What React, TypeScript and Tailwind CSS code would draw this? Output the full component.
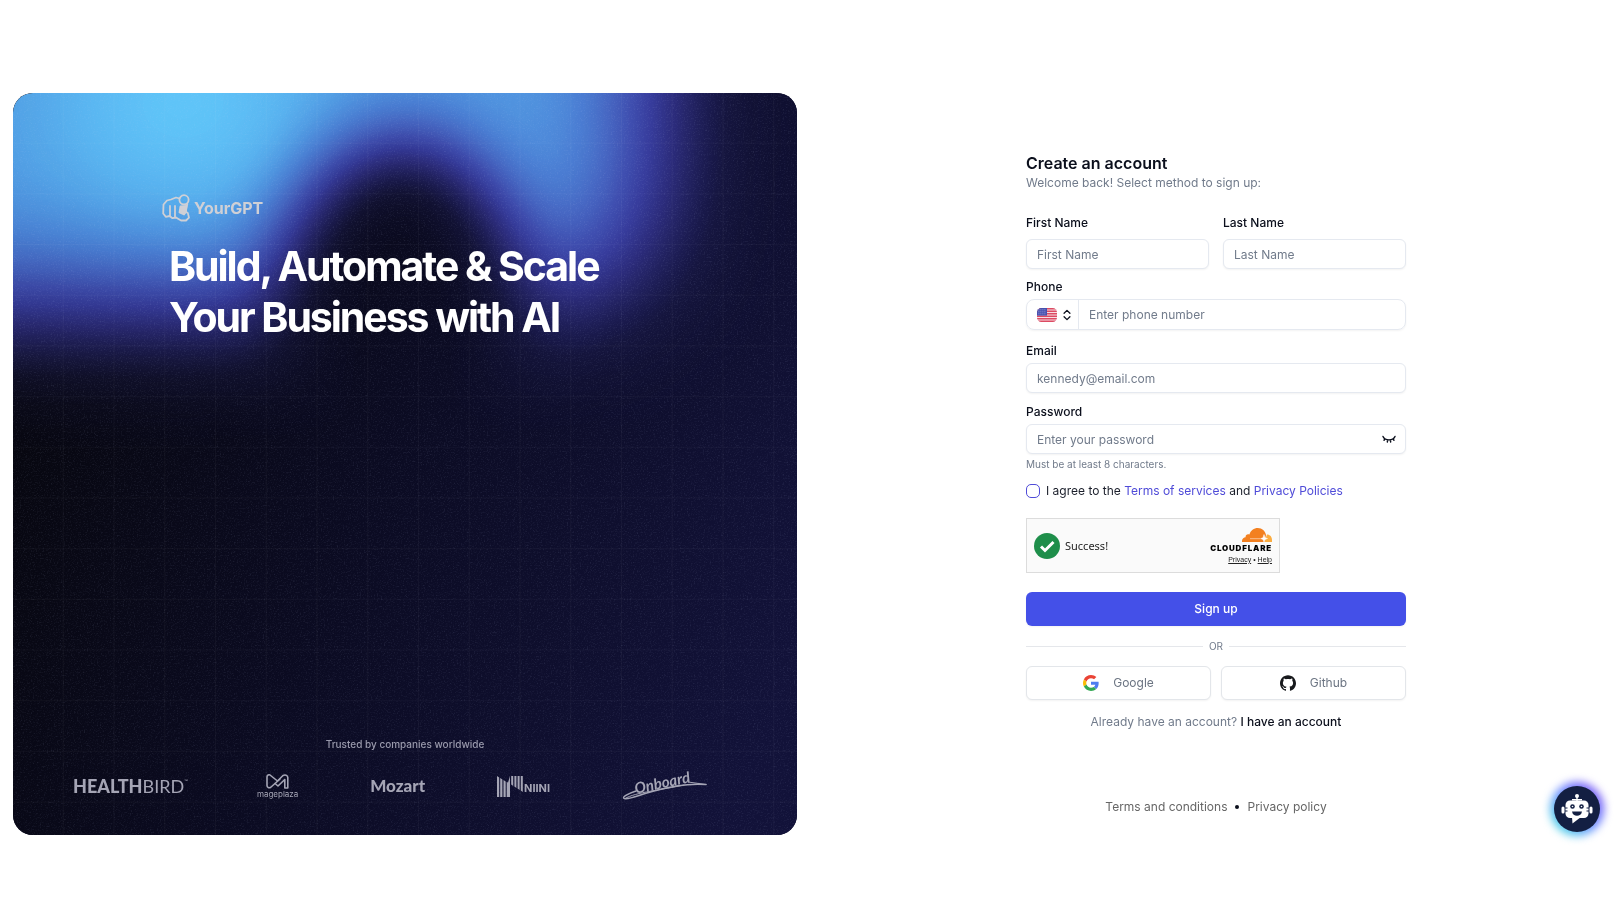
import type { ReactNode } from 'react';
import { ChevronsUpDown } from 'lucide-react';

const FIELD =
  'h-[30px] w-full rounded-md border border-[#e5e9f0] bg-white px-[10px] text-xs text-gray-800 shadow-xs outline-none placeholder:text-[#717b8b] focus:border-indigo-400';
const LABEL = 'text-xs leading-4 font-medium text-[#0b0f1c]';

function PanelBackground() {
  return (
    <svg
      className="absolute inset-0 h-full w-full"
      viewBox="0 0 784 743"
      preserveAspectRatio="none"
      aria-hidden="true"
    >
      <defs>
        <linearGradient id="base" x1="0" y1="0.4" x2="1" y2="0.75">
          <stop offset="0" stopColor="#07070f" />
          <stop offset="0.45" stopColor="#0b0b22" />
          <stop offset="1" stopColor="#121239" />
        </linearGradient>
        <pattern id="grid" width="50.75" height="50.75" patternUnits="userSpaceOnUse">
          <path d="M50.75 0V50.75H0" fill="none" stroke="#fff" strokeOpacity="0.05" strokeWidth="1.2" />
        </pattern>
        <filter id="hull" filterUnits="userSpaceOnUse" x="-500" y="-500" width="1500" height="1100" colorInterpolationFilters="sRGB">
          <feGaussianBlur stdDeviation="66" />
        </filter>
        <filter id="hole" x="-80%" y="-80%" width="260%" height="260%" colorInterpolationFilters="sRGB">
          <feGaussianBlur stdDeviation="40" />
        </filter>
        {/* maps a grey level to black, indigo, blue and cyan */}
        <filter id="ramp" filterUnits="userSpaceOnUse" x="0" y="0" width="784" height="743" colorInterpolationFilters="sRGB">
          <feComponentTransfer>
            <feFuncR type="table" tableValues="0 0.03 0.08 0.13 0.17 0.21 0.24 0.26 0.29 0.33 0.37" />
            <feFuncG type="table" tableValues="0 0.03 0.08 0.13 0.19 0.27 0.37 0.47 0.58 0.7 0.8" />
            <feFuncB type="table" tableValues="0 0.09 0.24 0.39 0.53 0.63 0.72 0.8 0.87 0.94 0.99" />
          </feComponentTransfer>
        </filter>
        <filter id="noise" colorInterpolationFilters="sRGB">
          <feTurbulence type="fractalNoise" baseFrequency="0.7" numOctaves="2" />
          <feColorMatrix values="0 0 0 0 0.8  0 0 0 0 0.85  0 0 0 0 1  2 2 0 0 -2" />
        </filter>
      </defs>
      <rect width="784" height="743" fill="url(#base)" />
      <g style={{ mixBlendMode: 'screen' }}>
        <g filter="url(#ramp)">
          <rect width="784" height="743" fill="#000" />
          <path
            d="M-400 -400H640V80Q640 210 530 205H300Q200 215 -400 212Z"
            fill="#fff"
            fillOpacity="0.8"
            filter="url(#hull)"
          />
          <ellipse cx="170" cy="10" rx="135" ry="110" fill="#fff" fillOpacity="0.95" filter="url(#hull)" />
          <ellipse cx="390" cy="215" rx="122" ry="168" fill="#000" filter="url(#hole)" />
        </g>
      </g>
      <rect width="784" height="743" fill="url(#grid)" />
      <rect width="784" height="743" filter="url(#noise)" opacity="0.09" />
    </svg>
  );
}

function HandLogo() {
  return (
    <svg width="28" height="28" viewBox="0 0 28 28" fill="none" stroke="currentColor" strokeWidth="1.8" strokeLinecap="round" strokeLinejoin="round" aria-hidden="true">
      <path d="M17.500 4.500 14 3.500 9 5.500 5 6.500 1.500 10.500 1.200 19.500 3.800 22.800 7.500 22 10.500 24.200 14 23.500 19 26.500h5l3-2.800-1.200-4.800-2.300-1.400 1.800-7.500" />
      <circle cx="22" cy="5.800" r="4.600" />
      <path d="M8 12v9.500M13 12v11" />
      <path d="M18.500 12.500 17.500 18.500 22 20.500 24 18 24.500 12Z" fill="currentColor" />
    </svg>
  );
}

function MageplazaMark() {
  return (
    <svg width="23" height="15" viewBox="0 0 23 15" fill="none" stroke="currentColor" strokeWidth="1.600" strokeLinejoin="round" strokeLinecap="round" aria-hidden="true">
      <path d="M4 1 11.500 7 17 1.500c2-1 4.800-.5 4.800 2V14h-3V5.500L12 12 9 9.500 4.500 13.500C3 14 1 13.500 1 11.500V3c0-2 2-2.500 3-2Z" />
      <path d="M9 9.500 14 5" />
    </svg>
  );
}

function NiiniMark() {
  return (
    <svg width="27" height="21" viewBox="0 0 27 21" fill="currentColor" aria-hidden="true">
      <path d="M0 0l2.200 1.500V21H0zM3.200 2l2.200 1.500V21H3.200zM6.500 4l2.200 1.500V21H6.500zM9.700 6l1.300.500L13 0v21H9.700zM14.200 0h2v10l-2-1.500zM17.400 0h2v12l-2-1.500zM20.600 0h2v14l-2-1.500zM23.800 0h2v16l-2-1.500z" />
    </svg>
  );
}

function OnboardMark() {
  return (
    <div className="relative h-8 w-[85px]">
      <svg className="absolute inset-0" width="85" height="32" viewBox="0 0 85 32" fill="none" stroke="currentColor" strokeLinecap="round" aria-hidden="true">
        <path d="M14 21C5 24 0 27 2 28.500c3 2 14-3 28-7S66 13 84 14.500" strokeWidth="1.500" />
        <path d="M3 28.500C14 22 40 20 62 15M84 14.500 66 12" strokeWidth="1" />
      </svg>
      <span className="absolute top-0.5 left-3 -rotate-12 font-['Lato'] text-[15px] leading-5 font-bold italic">Onboard</span>
    </div>
  );
}

function UsFlag() {
  return (
    <svg width="20" height="14" viewBox="0 0 20 14" aria-hidden="true">
      <clipPath id="flag">
        <rect width="20" height="14" rx="4.500" />
      </clipPath>
      <g clipPath="url(#flag)">
        <rect width="20" height="14" fill="#f6dfe4" />
        <path d="M0 .8h20M0 3.300h20M0 5.800h20M0 8.300h20M0 10.800h20M0 13.300h20" stroke="#dc4a62" strokeWidth="1.400" />
        <rect width="10" height="7.600" fill="#4650ae" />
        <path d="M1.500 1.800h8M1.500 3.800h8M1.500 5.800h8" stroke="#c9cdf0" strokeWidth="0.800" strokeDasharray="0.800 1.200" />
      </g>
    </svg>
  );
}

function ClosedEye() {
  return (
    <svg width="14" height="10" viewBox="0 0 14 10" fill="none" stroke="#0b0f1c" strokeWidth="1.400" strokeLinecap="round" aria-hidden="true">
      <path d="M1 1.500C3 6 11 6 13 1.500M3 4 2 5.300M11 4l1 1.300M5.700 5 5.300 7M8.300 5 8.700 7" />
    </svg>
  );
}

function CloudIcon() {
  return (
    <svg width="30" height="14" viewBox="0 0 30 14" aria-hidden="true">
      <path d="M22 14 25 6.500c3 0 5 2.300 5 5.500v2Z" fill="#fbad41" />
      <path d="M0 14c-.3-3 1.500-4.600 3.600-4.700C3.400 7 5.400 5.600 7.400 6.600 8.500 2.500 12 0 15.800 0c4.400 0 7.400 3 8.200 7l-1.600 7Z" fill="#f38020" />
      <path d="M8 10.700h14M22 6.500l1 3.200 2.500.8-2.500 1-1 2.500-1-2.500-2-1 2-.8Z" stroke="#fff" strokeWidth="0.500" fill="#fff" />
    </svg>
  );
}

function GoogleIcon() {
  return (
    <svg width="16" height="16" viewBox="0 0 48 48" aria-hidden="true">
      <path fill="#EA4335" d="M24 9.500c3.540 0 6.710 1.220 9.210 3.600l6.850-6.850C35.900 2.380 30.470 0 24 0 14.620 0 6.510 5.380 2.560 13.220l7.980 6.190C12.430 13.720 17.740 9.500 24 9.500z" />
      <path fill="#4f7df0" d="M46.980 24.550c0-1.570-.15-3.090-.38-4.550H24v9.020h12.940c-.58 2.960-2.260 5.480-4.780 7.180l7.730 6c4.510-4.180 7.090-10.360 7.090-17.650z" />
      <path fill="#FBBC05" d="M10.530 28.590c-.48-1.450-.76-2.990-.76-4.590s.27-3.140.76-4.590l-7.980-6.190C.92 16.460 0 20.120 0 24c0 3.880.92 7.540 2.560 10.780l7.970-6.190z" />
      <path fill="#34A853" d="M24 48c6.480 0 11.930-2.130 15.890-5.810l-7.730-6c-2.150 1.450-4.920 2.300-8.160 2.300-6.260 0-11.570-4.220-13.470-9.910l-7.980 6.190C6.510 42.620 14.620 48 24 48z" />
    </svg>
  );
}

function GithubIcon() {
  return (
    <svg width="16" height="16" viewBox="0 0 24 24" fill="#17191c" aria-hidden="true">
      <path d="M12 .297c-6.630 0-12 5.373-12 12 0 5.303 3.438 9.800 8.205 11.385.6.113.820-.258.820-.577 0-.285-.010-1.040-.015-2.040-3.338.724-4.042-1.610-4.042-1.610C4.422 18.070 3.633 17.700 3.633 17.700c-1.087-.744.084-.729.084-.729 1.205.084 1.838 1.236 1.838 1.236 1.070 1.835 2.809 1.305 3.495.998.108-.776.417-1.305.760-1.605-2.665-.300-5.466-1.332-5.466-5.930 0-1.310.465-2.380 1.235-3.220-.135-.303-.540-1.523.105-3.176 0 0 1.005-.322 3.300 1.230.960-.267 1.980-.399 3-.405 1.020.006 2.040.138 3 .405 2.280-1.552 3.285-1.230 3.285-1.230.645 1.653.240 2.873.120 3.176.765.840 1.230 1.910 1.230 3.220 0 4.610-2.805 5.625-5.475 5.920.420.360.810 1.096.810 2.220 0 1.606-.015 2.896-.015 3.286 0 .315.210.690.825.570C20.565 22.092 24 17.592 24 12.297c0-6.627-5.373-12-12-12" />
    </svg>
  );
}

function RobotIcon() {
  return (
    <svg width="32" height="30" viewBox="0 0 32 30" fill="#fff" aria-hidden="true">
      <circle cx="16" cy="2" r="2" />
      <path d="M15.300 3h1.400v4h-1.400zM11 5h10v1.500H11z" />
      <rect x="4.500" y="6.500" width="23" height="17.500" rx="4.500" />
      <path d="M11 23h9l-8.500 6.500Z" />
      <rect x="0.500" y="12.500" width="3" height="7" rx="1.500" />
      <rect x="28.500" y="12.500" width="3" height="7" rx="1.500" />
      <circle cx="11.500" cy="12.500" r="2.300" fill="#131f42" />
      <circle cx="20.500" cy="12.500" r="2.300" fill="#131f42" />
      <circle cx="11.500" cy="12.500" r="0.800" />
      <circle cx="20.500" cy="12.500" r="0.800" />
      <path d="M11 17.500h10c-.5 3-2.500 4.200-5 4.200s-4.500-1.200-5-4.200Z" fill="#131f42" />
      <path d="M4 14h2.500M4 17h2.500M25.500 14H28M25.500 17H28" stroke="#131f42" strokeWidth="1" />
    </svg>
  );
}

function SocialButton({ icon, children }: { icon: ReactNode; children: ReactNode }) {
  return (
    <button
      type="button"
      className="flex h-[34px] items-center justify-center gap-[14px] rounded-md border border-[#e3e6ea] bg-white text-xs text-[#6b7482] shadow-xs"
    >
      {icon}
      {children}
    </button>
  );
}

function Showcase() {
  return (
    <section className="relative flex flex-1 flex-col overflow-hidden rounded-[20px] bg-[#0c0c26]">
      <PanelBackground />
      <div className="relative mx-auto mt-[101px] w-[486px] max-w-full">
        <div className="flex items-center gap-1 text-[#cfd0d6]">
          <HandLogo />
          <span className="text-base leading-7 font-bold">YourGPT</span>
        </div>
        <h1 className="mt-[19px] pl-[7px] text-[41px] leading-[51px] font-bold tracking-tighter text-white">
          Build, Automate &amp; Scale
          <br />
          Your Business with AI
        </h1>
      </div>

      <div className="relative mt-auto pb-[33px]">
        <p className="text-center text-[10px] leading-4 font-medium text-[#9a9aac]">Trusted by companies worldwide</p>
        <div className="mt-[18px] flex items-center justify-between pr-[90px] pl-[60px] text-[#a5a5b5]">
          <div className="flex w-[112px] font-['Lato'] text-[18px] leading-8">
            <span className="font-black">HEALTH</span>
            <span className="font-normal">BIRD</span>
            <span className="text-[5px] leading-[22px]">™</span>
          </div>
          <div className="flex flex-col items-center">
            <MageplazaMark />
            <span className="text-[8px] leading-[10px]">mageplaza</span>
          </div>
          <div className="font-['Lato'] text-[17px] leading-8 font-black">Mozart</div>
          <div className="flex items-center">
            <NiiniMark />
            <span className="pt-1 text-[11px] leading-4 font-bold">NIINI</span>
          </div>
          <OnboardMark />
        </div>
      </div>
    </section>
  );
}

function SignUpForm() {
  return (
    <form className="flex flex-col" onSubmit={(e) => e.preventDefault()}>
      <h2 className="text-base leading-5 font-semibold text-[#0b0f1c]">Create an account</h2>
      <p className="text-xs leading-5 text-[#717b8b]">Welcome back! Select method to sign up:</p>

      <div className="mt-[22px] grid grid-cols-2 gap-[14px]">
        <div className="flex flex-col gap-2">
          <label htmlFor="first-name" className={LABEL}>First Name</label>
          <input id="first-name" placeholder="First Name" className={FIELD} />
        </div>
        <div className="flex flex-col gap-2">
          <label htmlFor="last-name" className={LABEL}>Last Name</label>
          <input id="last-name" placeholder="Last Name" className={FIELD} />
        </div>
      </div>

      <label htmlFor="phone" className={`mt-[10px] ${LABEL}`}>Phone</label>
      <div className="mt-1 flex h-[31px] rounded-lg border border-[#e5e9f0] shadow-xs">
        <button type="button" aria-label="Country" className="flex w-[52px] items-center gap-[3px] border-r border-[#e5e9f0] pl-[10px]">
          <UsFlag />
          <ChevronsUpDown size={14} strokeWidth={2.2} color="#0b0f1c" />
        </button>
        <input
          id="phone"
          type="tel"
          placeholder="Enter phone number"
          className="min-w-0 flex-1 bg-transparent px-[10px] text-xs outline-none placeholder:text-[#717b8b]"
        />
      </div>

      <label htmlFor="email" className={`mt-[13px] ${LABEL}`}>Email</label>
      <input id="email" type="email" placeholder="kennedy@email.com" className={`mt-1 ${FIELD}`} />

      <label htmlFor="password" className={`mt-[11px] ${LABEL}`}>Password</label>
      <div className="relative mt-1">
        <input id="password" type="password" placeholder="Enter your password" className={FIELD} />
        <button type="button" aria-label="Show password" className="absolute top-[11px] right-[10px]">
          <ClosedEye />
        </button>
      </div>
      <p className="mt-[2px] text-[10px] leading-4 text-[#717b8b]">Must be at least 8 characters.</p>

      <div className="mt-[9px] flex items-center gap-[6px] text-xs leading-5 text-[#1b1f2b]">
        <input
          id="agree"
          type="checkbox"
          className="size-[14px] appearance-none rounded-[5px] border border-[#4f4bd8] checked:bg-[#4f4bd8]"
        />
        <label htmlFor="agree">
          I agree to the <a href="#terms" className="text-[#4f4bd8]">Terms of services</a> and{' '}
          <a href="#privacy" className="text-[#4f4bd8]">Privacy Policies</a>
        </label>
      </div>

      <div className="mt-[17px] flex h-[55px] w-[254px] items-center justify-between border border-[#dcdcdc] bg-[#fafafa] px-[7px]">
        <div className="flex items-center gap-[5px]">
          <svg width="26" height="26" viewBox="0 0 26 26" aria-hidden="true">
            <circle cx="13" cy="13" r="13" fill="#1e8e4a" />
            <path d="m7 13.500 4 4L19.500 9" fill="none" stroke="#fff" strokeWidth="3" />
          </svg>
          <span className="font-['Noto_Sans'] text-[11px] leading-4 text-[#232323]">Success!</span>
        </div>
        <div className="flex flex-col items-end">
          <CloudIcon />
          <span className="mt-[2px] text-[8px] leading-[8px] font-black tracking-widest text-black">CLOUDFLARE</span>
          <div className="mt-[3px] flex gap-[2px] font-['Liberation_Sans'] text-[7px] leading-[9px] text-[#232323]">
            <a href="#cf-privacy" className="underline">Privacy</a>
            <span>•</span>
            <a href="#cf-help" className="underline">Help</a>
          </div>
        </div>
      </div>

      <button type="submit" className="mt-[19px] h-[34px] rounded-md bg-[#4450e8] text-xs font-medium text-white shadow-xs">
        Sign up
      </button>

      <div className="mt-[12px] flex items-center gap-[6px] text-[10px] leading-4 text-[#717b8b]">
        <span className="h-px flex-1 bg-[#e5e7eb]" />
        OR
        <span className="h-px flex-1 bg-[#e5e7eb]" />
      </div>

      <div className="mt-[12px] grid grid-cols-2 gap-[10px]">
        <SocialButton icon={<GoogleIcon />}>Google</SocialButton>
        <SocialButton icon={<GithubIcon />}>Github</SocialButton>
      </div>

      <p className="mt-[12px] text-center text-xs leading-5 text-[#717b8b]">
        Already have an account?{' '}
        <a href="#login" className="font-medium text-[#0b0f1c]">I have an account</a>
      </p>
    </form>
  );
}

export default function App() {
  return (
    <div className="grid min-h-screen grid-cols-2 bg-white font-['Inter',sans-serif]">
      <div className="flex flex-col px-[13px] pt-[93px] pb-[89px]">
        <Showcase />
      </div>

      <main className="flex flex-col items-center pt-[153px] pb-[107px] pl-[2px]">
        <div className="w-[380px] max-w-full">
          <SignUpForm />
        </div>
        <footer className="mt-auto flex items-center gap-2 text-xs leading-5 text-[#666]">
          <a href="#terms-conditions">Terms and conditions</a>
          <span className="size-1 rounded-full bg-[#0b0f1c]" />
          <a href="#privacy-policy">Privacy policy</a>
        </footer>
      </main>

      <button type="button" aria-label="Open chat" className="fixed right-[20px] bottom-[92px] size-[46px]">
        <span className="absolute -inset-1 rounded-full bg-linear-to-tr from-[#30f0d8] via-[#6a8cff] to-[#7a3cf0] blur-xs" />
        <span className="relative flex size-[46px] items-center justify-center rounded-full bg-[#131f42]">
          <RobotIcon />
        </span>
      </button>
    </div>
  );
}
